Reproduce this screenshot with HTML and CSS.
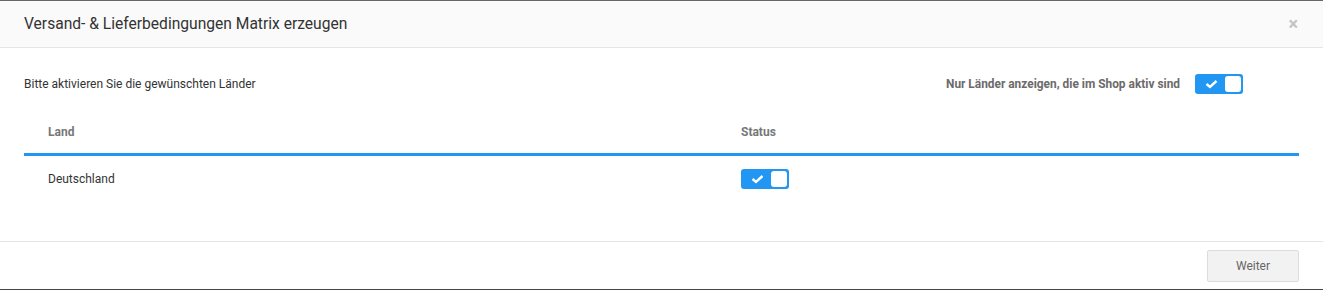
FILE: index.html
```html
<!DOCTYPE html>
<html lang="de">
<head>
    <meta charset="UTF-8">
    <title>Versand- &amp; Lieferbedingungen Matrix erzeugen</title>
    <link rel="stylesheet" href="styles.css">
</head>
<body>
    <div class="modal">
        <div class="modal-header">
            <h4 class="modal-title">Versand- &amp; Lieferbedingungen Matrix erzeugen</h4>
            <span class="close">&times;</span>
        </div>

        <div class="modal-body">
            <div class="intro">
                <span class="intro-text">Bitte aktivieren Sie die gewünschten Länder</span>
                <label class="filter">
                    <span class="filter-label">Nur Länder anzeigen, die im Shop aktiv sind</span>
                    <span class="switch">
                        <svg class="check" width="13" height="10" viewBox="0 0 13 10"><path d="M1.5 5 L5 8 L11.5 2" fill="none" stroke="#fff" stroke-width="2.4"/></svg>
                        <span class="knob"></span>
                    </span>
                </label>
            </div>

            <div class="table">
                <div class="table-head">
                    <div class="cell">Land</div>
                    <div class="cell">Status</div>
                </div>
                <div class="table-row">
                    <div class="cell">Deutschland</div>
                    <div class="cell">
                        <span class="switch">
                            <svg class="check" width="13" height="10" viewBox="0 0 13 10"><path d="M1.5 5 L5 8 L11.5 2" fill="none" stroke="#fff" stroke-width="2.4"/></svg>
                            <span class="knob"></span>
                        </span>
                    </div>
                </div>
            </div>
        </div>

        <div class="modal-footer">
            <button class="btn">Weiter</button>
        </div>
    </div>
</body>
</html>
```

FILE: styles.css
```css
body {
    margin: 0;
    background: #fff;
    font-family: 'Roboto', sans-serif;
    color: #333;
}

.modal {
    height: 288px;
    border-top: 1px solid #666;
    border-bottom: 1px solid #444;
    display: flex;
    flex-direction: column;
}

.modal-header {
    height: 46px;
    background: #fafafa;
    border-bottom: 1px solid #e5e5e5;
    display: flex;
    align-items: center;
    justify-content: space-between;
    padding: 0 24px;
}

.modal-title {
    margin: 0;
    font-size: 15.6px;
    font-weight: 400;
    color: #333;
}

.close {
    font-size: 18px;
    font-weight: 700;
    color: #c4c4c4;
    margin-right: 1px;
    line-height: 1;
}

.modal-body {
    flex: 1;
    padding: 24px 24px 0;
}

.intro {
    display: flex;
    justify-content: space-between;
    align-items: center;
    height: 24px;
}

.intro-text {
    font-size: 12px;
}

.filter {
    display: flex;
    align-items: center;
    gap: 15px;
    margin-right: 56px;
}

.filter-label {
    font-size: 11.9px;
    font-weight: 700;
    color: #6b6b6b;
}

.switch {
    box-sizing: border-box;
    width: 48px;
    height: 20px;
    background: #2196f3;
    border-radius: 3px;
    display: inline-flex;
    align-items: center;
    justify-content: space-between;
    padding: 2px 2px 2px 10px;
}

.check {
    display: block;
}

.knob {
    width: 16px;
    height: 16px;
    background: #fff;
    border-radius: 3px;
}

.table {
    margin-top: 20px;
}

.table-head,
.table-row {
    display: grid;
    grid-template-columns: 693px 1fr;
    box-sizing: border-box;
}

.table-head {
    height: 40px;
    padding-bottom: 5px;
    align-items: center;
    border-bottom: 3px solid #2196f3;
    font-size: 12px;
    font-weight: 700;
    color: #777;
}

.table-row {
    height: 46px;
    align-items: center;
    font-size: 12px;
}

.cell {
    padding-left: 24px;
}

.table-row .cell .switch {
    display: flex;
}

.modal-footer {
    border-top: 1px solid #e5e5e5;
    height: 47px;
    display: flex;
    justify-content: flex-end;
    align-items: center;
    padding: 0 24px;
}

.btn {
    width: 92px;
    height: 32px;
    margin-top: 1px;
    background: #f2f2f2;
    border: 1px solid #dcdcdc;
    border-radius: 2px;
    font-family: 'Roboto', sans-serif;
    font-size: 12px;
    color: #666;
}
```
